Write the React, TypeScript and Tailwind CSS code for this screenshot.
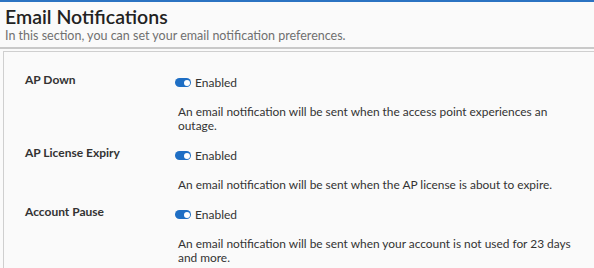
import React from 'react';

const items = [
  {
    label: 'AP Down',
    text: 'An email notification will be sent when the access point experiences an outage.',
  },
  {
    label: 'AP License Expiry',
    text: 'An email notification will be sent when the AP license is about to expire.',
  },
  {
    label: 'Account Pause',
    text: 'An email notification will be sent when your account is not used for 23 days and more.',
  },
];

const Toggle = () => (
  <span className="relative inline-block w-[16px] h-[9px] rounded-full bg-[#1e6ec4]">
    <span className="absolute right-[1.5px] top-[1.5px] w-[6px] h-[6px] rounded-full bg-white" />
  </span>
);

export default function App() {
  return (
    <div
      className="w-[594px] h-[268px] overflow-hidden bg-[#fafafa] border-t-2 border-[#2b73c2] text-[#333]"
      style={{ fontFamily: 'Lato, "Open Sans", sans-serif' }}
    >
      <div className="px-[5px] pt-[3px] pb-[4px] border-b-2 border-[#c9c9c9]">
        <h1 className="text-[19.5px] leading-[24px] font-semibold text-[#222]">Email Notifications</h1>
        <p className="text-[12.5px] leading-[14px] text-[#707070]">
          In this section, you can set your email notification preferences.
        </p>
      </div>
      <div className="mt-[2px] ml-[3px] h-full border-t border-l border-[#cfcfcf] pt-[20px] flex flex-col gap-[12px]">
        {items.map((it) => (
          <div key={it.label} className="flex text-[12px]">
            <div className="w-[171px] pl-[21px] leading-[15px] font-bold text-[#333]">{it.label}</div>
            <div className="w-[405px]">
              <div className="mt-[3px] h-[15px] flex items-center gap-[4px] leading-[15px] text-[#333]">
                <Toggle />
                <span>Enabled</span>
              </div>
              <p className="mt-[15px] pl-[3px] text-[11.9px] leading-[14px] text-[#333]">{it.text}</p>
            </div>
          </div>
        ))}
      </div>
    </div>
  );
}
